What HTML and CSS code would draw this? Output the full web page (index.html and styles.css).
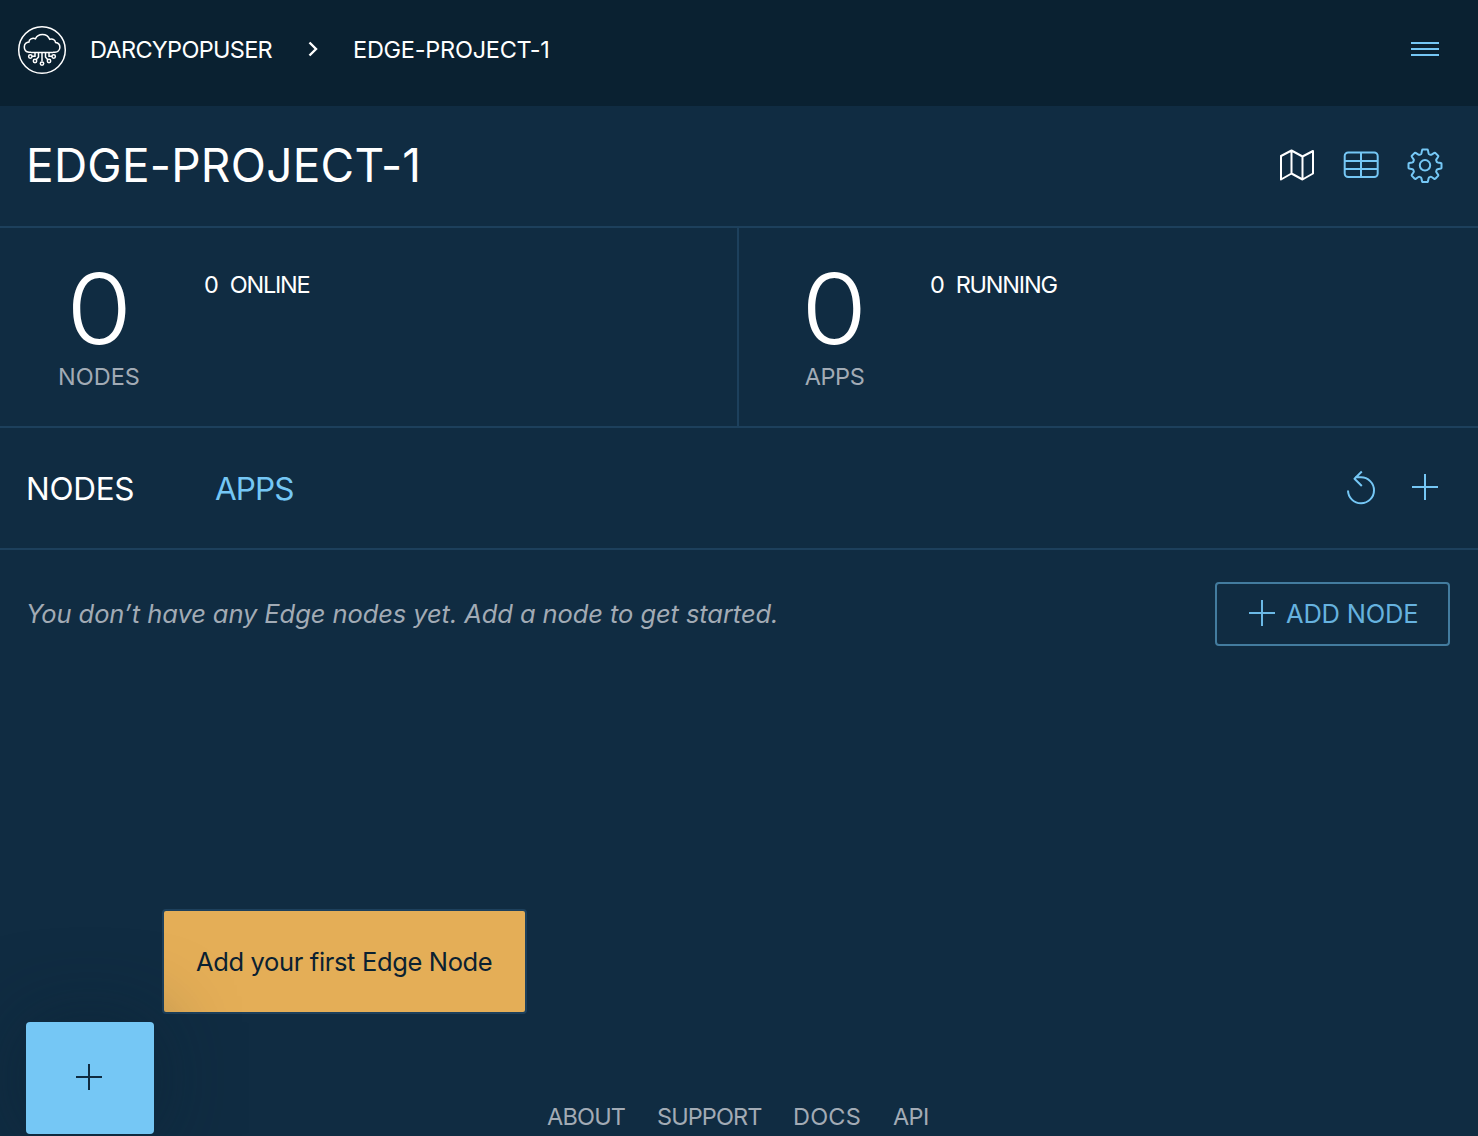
FILE: index.html
```html
<!DOCTYPE html>
<html lang="en">
<head>
<meta charset="utf-8">
<title>EDGE-PROJECT-1</title>
<link rel="stylesheet" href="styles.css">
</head>
<body>
<header class="topbar">
  <svg class="logo" viewBox="0 0 50 50" width="50" height="50">
    <circle cx="25" cy="25" r="23.3"/>
    <path d="M14 27.200h-2c-2.800-.3-4.700-2.500-4.700-5.300 0-2.900 2.200-4.800 4.700-5-.1-2.600 3.300-4.500 6.500-3.200 1.200-2.600 4-4.100 6.900-4.100 3.600 0 6.300 2.300 7.300 4.700 3.200-.8 5.600.5 5.900 3.300 2.600.4 4.300 2 4.300 4.600 0 2.800-2.100 4.900-5 5H36"/>
    <path d="M14 27.600h22M21.500 27.600v4.400l-2.500 3M25 27.600v8.600M28.500 27.600v4.400l2.500 3M15 31.200h3v-3.600M35 31.200h-3v-3.600"/>
    <circle cx="13.300" cy="31.500" r="1.700"/><circle cx="18" cy="36" r="1.700"/><circle cx="25" cy="38.600" r="1.700"/><circle cx="32" cy="36" r="1.700"/><circle cx="36.700" cy="31.500" r="1.700"/>
  </svg>
  <nav class="crumbs">
    <span class="crumb-user">DARCYPOPUSER</span>
    <svg class="chevron" viewBox="0 0 10 16" width="10" height="16"><path d="M1.500 1.500L8 8l-6.500 6.500"/></svg>
    <span class="crumb-project">EDGE-PROJECT-1</span>
  </nav>
  <svg class="icon menu" viewBox="0 0 28 14" width="28" height="14"><path d="M0 1h28M0 7h28M0 13h28"/></svg>
</header>

<section class="title-row">
  <h1>EDGE-PROJECT-1</h1>
  <div class="view-icons">
    <svg class="icon active" viewBox="0 0 36 36" width="36" height="36"><path d="M2 9L12.500 3.500l11 6L34 4v22.500l-10.500 6-11-6L2 32.500zM12.500 3.500v23M23.500 9.500v23"/></svg>
    <svg class="icon" viewBox="0 0 36 36" width="36" height="36"><rect x="1.700" y="5.500" width="33" height="24.600" rx="3.500"/><path d="M2 14h32M2 22h32M18 6v24"/></svg>
    <svg class="icon gear" viewBox="0 0 36 36" width="36" height="36"><circle cx="18" cy="18.300" r="5.200"/><path d="M15.800 2.500h4.400q.6 0 .7.600l.7 3.300q.2.700.9 1l.8.300q.7.300 1.300-.1l2.700-1.800q.5-.3 1 .1l2.800 2.800q.4.500.1 1l-1.800 2.700q-.4.600-.1 1.300l.3.800q.3.700 1 .9l3.300.7q.6.100.6.700v4q0 .6-.6.700l-3.300.7q-.7.200-1 .9l-.3.800q-.3.700.1 1.300l1.800 2.700q.3.500-.1 1l-2.800 2.800q-.5.400-1 .1l-2.700-1.800q-.6-.4-1.300-.1l-.8.300q-.7.300-.9 1l-.7 3.300q-.1.600-.7.600h-4.400q-.6 0-.7-.6l-.7-3.300q-.2-.7-.9-1l-.8-.3q-.7-.3-1.300.1l-2.700 1.800q-.5.300-1-.1l-2.800-2.800q-.4-.5-.1-1l1.800-2.700q.4-.6.1-1.300l-.3-.8q-.3-.7-1-.9l-3.300-.7q-.6-.1-.6-.7v-4q0-.6.600-.7l3.300-.7q.7-.2 1-.9l.3-.8q.3-.7-.1-1.300l-1.800-2.700q-.3-.5.1-1l2.800-2.800q.5-.4 1-.1l2.700 1.800q.6.400 1.300.1l.8-.3q.7-.3.900-1l.7-3.300q.1-.6.700-.6z"/></svg>
  </div>
</section>

<section class="stats">
  <div class="stat stat-nodes">
    <div class="count"><span class="number">0</span><span class="label">NODES</span></div>
    <div class="status"><span>0</span><span class="status-online">ONLINE</span></div>
  </div>
  <div class="stat stat-apps">
    <div class="count"><span class="number">0</span><span class="label label-apps">APPS</span></div>
    <div class="status"><span>0</span><span class="status-running">RUNNING</span></div>
  </div>
</section>

<section class="tabs">
  <span class="tab current">NODES</span>
  <span class="tab tab-apps">APPS</span>
  <div class="tab-actions">
    <svg class="icon" viewBox="0 0 30 36" width="30" height="36"><path d="M2 20.500a13 13 0 1 0 13-13.200H9M15.800 1.500L8.500 8.700l7.300 7.300"/></svg>
    <svg class="icon plus" viewBox="0 0 26 26" width="26" height="26"><path d="M0 13h26M13 0v26"/></svg>
  </div>
</section>

<main class="content">
  <p class="empty">You don’t have any Edge nodes yet. Add a node to get started.</p>
  <button class="add-node">
    <svg class="icon plus" viewBox="0 0 26 26" width="26" height="26"><path d="M0 13h26M13 0v26"/></svg>
    <span>ADD NODE</span>
  </button>
</main>

<div class="tooltip"><span>Add your first Edge Node</span></div>
<button class="fab"><svg class="icon" viewBox="0 0 26 26" width="26" height="26"><path d="M0 13h26M13 0v26"/></svg></button>

<footer class="footer">
  <a class="about">ABOUT</a><a class="support">SUPPORT</a><a class="docs">DOCS</a><a class="api">API</a>
</footer>
</body>
</html>
```
FILE: styles.css
```css
* { box-sizing: border-box; }
body {
  margin: 0;
  height: 1136px;
  overflow: hidden;
  display: flex;
  flex-direction: column;
  background: #102c42;
  color: #fff;
  font-family: Inter, "Liberation Sans", sans-serif;
  font-feature-settings: "cv11";
  font-size: 23.5px;
  line-height: 28px;
  white-space: nowrap;
}
svg { display: block; flex: none; fill: none; stroke: #fff; stroke-width: 1.5; }
.icon { stroke: #75c7f5; stroke-width: 2; stroke-linejoin: round; }
.icon.active { stroke: #fff; }
button { font: inherit; font-feature-settings: inherit; padding: 0; }

.topbar {
  height: 106px;
  flex: none;
  display: flex;
  align-items: center;
  padding: 0 39px 7px 17px;
  background: #0a2131;
}
.logo { margin-right: 23px; }
.crumbs { display: flex; align-items: center; letter-spacing: -0.7px; }
.crumb-user { width: 218px; }
.crumb-project { letter-spacing: -0.25px; }
.chevron { margin: -1px 35px 0 0; stroke-width: 2.400; }
.menu { margin: -1px 0 0 auto; }

.title-row {
  height: 122px;
  flex: none;
  display: flex;
  align-items: center;
  justify-content: space-between;
  padding: 0 35px 2px 26px;
  border-bottom: 2px solid #1d405c;
}
h1 { margin: 0; font-size: 46px; line-height: 56px; font-weight: 400; letter-spacing: 0.25px; }
.view-icons { display: flex; gap: 28px; }

.stats {
  height: 200px;
  flex: none;
  display: grid;
  grid-template-columns: 739px 1fr;
  border-bottom: 2px solid #1d405c;
}
.stat { display: flex; }
.stat-nodes { border-right: 2px solid #1d405c; }
.count { width: 198px; display: flex; flex-direction: column; align-items: center; }
.stat-apps .count { width: 191px; }
.number {
  margin-top: 31px;
  font-size: 98px;
  line-height: 100px;
  font-weight: 300;
  transform: scaleX(1.09);
}
.label { color: #a2abb5; margin-top: 4px; }
.label-apps { letter-spacing: -0.4px; }
.status { display: flex; gap: 12px; padding: 43px 0 0 6px; letter-spacing: -1.2px; }
.stat-apps .status { padding-left: 0; }

.tabs {
  height: 122px;
  flex: none;
  display: flex;
  align-items: center;
  padding: 0 40px 0 26px;
  border-bottom: 2px solid #1d405c;
  font-size: 31.5px;
  line-height: 40px;
}
.tab { padding-top: 1px; color: #75c7f5; }
.tab.current { width: 189px; color: #fff; letter-spacing: -0.3px; }
.tab-apps { letter-spacing: -0.9px; }
.tab-actions { display: flex; align-items: center; gap: 36px; margin-left: auto; }
.plus { margin-bottom: 2px; }

.content {
  height: 358px;
  flex: none;
  display: flex;
  align-items: flex-start;
  justify-content: space-between;
  padding: 32px 28px 0 26px;
}
.empty {
  margin: 0;
  font-size: 25.5px;
  line-height: 64px;
  font-style: italic;
  letter-spacing: -0.08px;
  color: #a2abb5;
}
.add-node {
  width: 235px;
  height: 64px;
  display: flex;
  align-items: center;
  gap: 11px;
  padding-left: 32px;
  border: 2px solid #437c9f;
  border-radius: 4px;
  background: none;
  color: #66b2df;
  font-size: 25.5px;
  letter-spacing: -0.2px;
}
.add-node .icon { stroke: #6bb9e6; }

.tooltip {
  position: absolute;
  left: 162px;
  top: 909px;
  width: 365px;
  height: 105px;
  display: flex;
  align-items: center;
  padding-left: 32px;
  border: 2px solid #1d405c;
  border-radius: 4px;
  background: #e4ae57;
  color: #0a2131;
  font-size: 25.5px;
  letter-spacing: -0.35px;
}
.fab {
  position: absolute;
  left: 26px;
  top: 1022px;
  width: 128px;
  height: 112px;
  display: flex;
  align-items: center;
  justify-content: center;
  padding: 0 2px 2px 0;
  border: 0;
  border-radius: 4px;
  background: #75c7f5;
  box-shadow: 0 0 80px rgba(10, 33, 49, 0.5);
}
.fab .icon { stroke: #0f2b40; }

.footer {
  margin-top: auto;
  display: flex;
  padding: 0 0 5px 547px;
  color: #a2abb5;
}
.about { width: 110px; letter-spacing: -0.8px; }
.support { width: 136px; letter-spacing: -0.9px; }
.docs { width: 100px; letter-spacing: 0.2px; }
.api { letter-spacing: -0.6px; }
```
